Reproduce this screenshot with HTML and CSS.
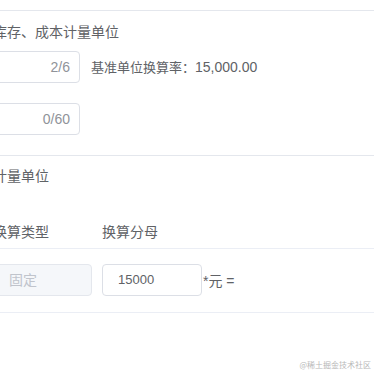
FILE: index.html
```html
<!DOCTYPE html>
<html lang="zh-CN">
<head>
<meta charset="utf-8">
<title>计量单位</title>
<link rel="stylesheet" href="styles.css">
</head>
<body>
<div class="page">
  <div class="divider"></div>
  <div class="section-title title-first">库存、成本计量单位</div>
  <div class="form-row row-first">
    <div class="input"><span class="count">2/6</span></div>
    <span class="rate">基准单位换算率：<span class="rate-value">15,000.00</span></span>
  </div>
  <div class="form-row row-second">
    <div class="input"><span class="count">0/60</span></div>
  </div>
  <div class="divider divider-second"></div>
  <div class="section-title title-second">计量单位</div>
  <div class="table">
    <div class="th">换算类型</div>
    <div class="th th-second">换算分母</div>
    <div class="td"><div class="cell-input cell-disabled">固定</div></div>
    <div class="td td-second"><div class="cell-input cell-value">15000</div><span class="unit">*元 =</span></div>
  </div>
</div>
<div class="watermark">@稀土掘金技术社区</div>
</body>
</html>
```

FILE: styles.css
```css
html, body {
  margin: 0;
  padding: 0;
  width: 374px;
  height: 374px;
  overflow: hidden;
  background: #ffffff;
}

body {
  position: relative;
  font-family: "Liberation Sans", "Noto Sans CJK SC", sans-serif;
  font-size: 14px;
  color: #606266;
}

.page {
  margin-left: -7px;
  padding-top: 10px;
}

.divider {
  height: 1px;
  background: #e4e7ed;
}

.divider-second {
  margin-top: 20px;
}

.section-title {
  line-height: 22px;
  white-space: nowrap;
}

.title-first {
  margin-top: 10px;
}

.title-second {
  margin-top: 9px;
}

.form-row {
  display: flex;
  align-items: center;
  height: 32px;
}

.row-first {
  margin-top: 8px;
}

.row-second {
  margin-top: 20px;
}

.input {
  box-sizing: border-box;
  width: 87px;
  height: 32px;
  border: 1px solid #dcdfe6;
  border-radius: 4px;
  display: flex;
  align-items: center;
  justify-content: flex-end;
  padding-right: 9px;
}

.count {
  color: #909399;
  line-height: 30px;
}

.rate {
  margin-left: 11px;
  font-size: 13px;
  line-height: 22px;
  white-space: nowrap;
}

.rate-value {
  font-size: 14px;
}

.table {
  margin-top: 29px;
  display: grid;
  grid-template-columns: 109px 1fr;
}

.th {
  padding: 5px 0;
  line-height: 22px;
  border-bottom: 1px solid #ebeef5;
  white-space: nowrap;
}

.td {
  padding: 15px 0 16px;
  border-bottom: 1px solid #ebeef5;
  display: flex;
  align-items: center;
}

.cell-input {
  box-sizing: border-box;
  height: 32px;
  line-height: 30px;
  border: 1px solid #dcdfe6;
  border-radius: 4px;
  padding: 0 15px;
}

.cell-disabled {
  width: 99px;
  background: #f5f7fa;
  border-color: #e4e7ed;
  color: #c0c4cc;
}

.cell-value {
  width: 100px;
  font-size: 13px;
  color: #606266;
}

.unit {
  margin-left: 1px;
  white-space: nowrap;
}

.watermark {
  position: absolute;
  right: 3px;
  bottom: 4px;
  font-family: "Noto Sans CJK SC", sans-serif;
  font-size: 8px;
  line-height: 10px;
  color: #b8b8b8;
  white-space: nowrap;
}
```
